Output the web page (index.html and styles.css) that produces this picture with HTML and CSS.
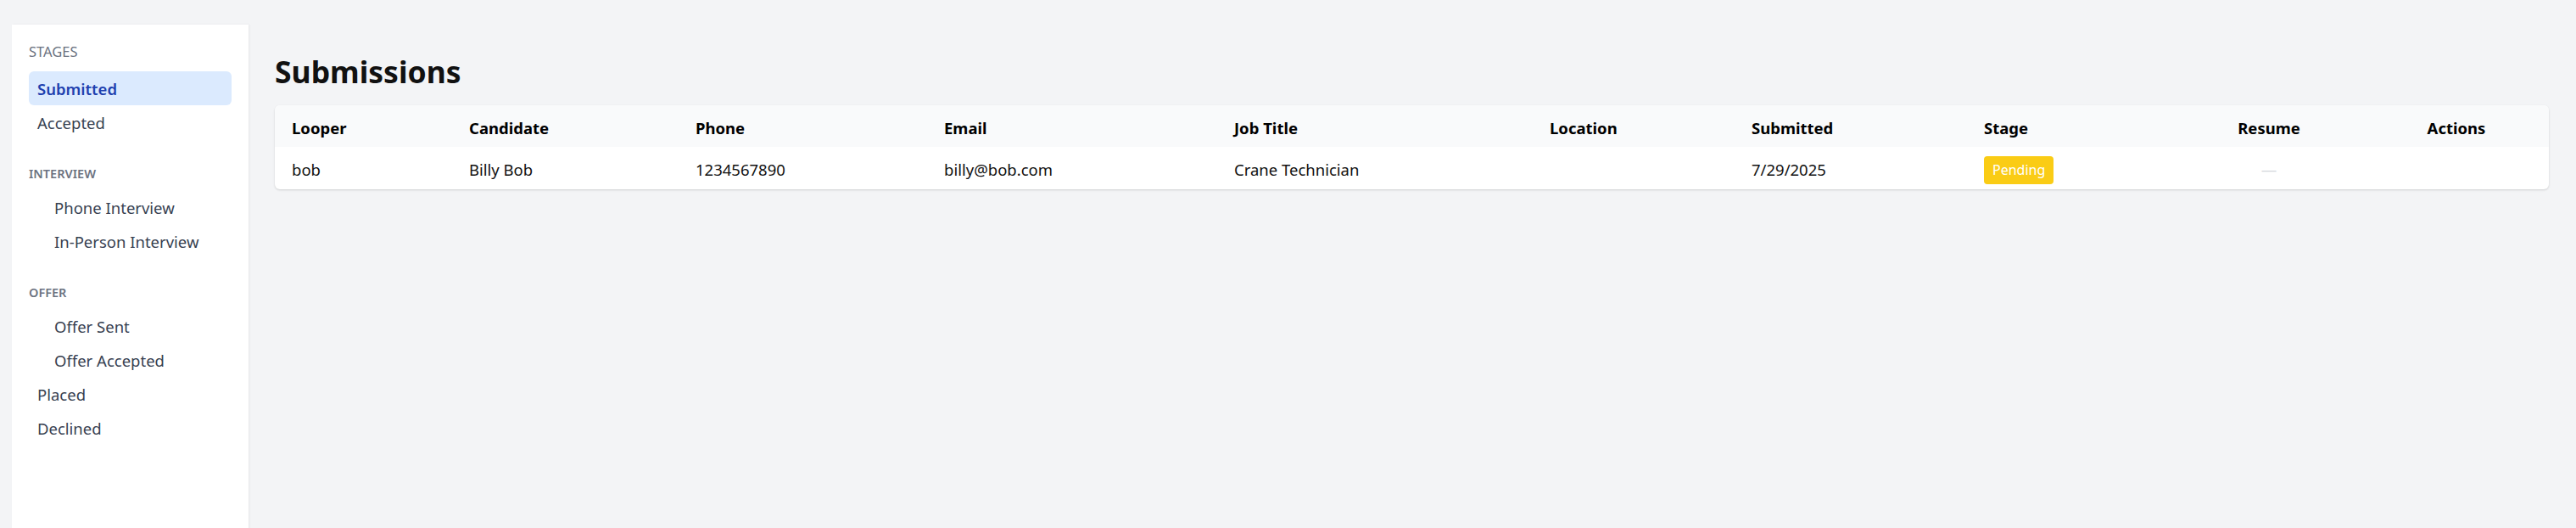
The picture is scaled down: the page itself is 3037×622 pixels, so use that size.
FILE: index.html
```html
<!DOCTYPE html>
<html lang="en">
<head>
<meta charset="utf-8">
<title>Submissions</title>
<link rel="stylesheet" href="styles.css">
</head>
<body>
<div class="layout">
  <aside class="sidebar">
    <div class="section-title">STAGES</div>
    <ul class="nav">
      <li class="nav-item active">Submitted</li>
      <li class="nav-item">Accepted</li>
    </ul>
    <div class="group-title">INTERVIEW</div>
    <ul class="nav sub">
      <li class="nav-item">Phone Interview</li>
      <li class="nav-item">In-Person Interview</li>
    </ul>
    <div class="group-title">OFFER</div>
    <ul class="nav sub">
      <li class="nav-item">Offer Sent</li>
      <li class="nav-item">Offer Accepted</li>
    </ul>
    <ul class="nav">
      <li class="nav-item">Placed</li>
      <li class="nav-item">Declined</li>
    </ul>
  </aside>
  <main class="main">
    <h1 class="page-title">Submissions</h1>
    <div class="card">
      <table class="table">
        <colgroup>
          <col class="c-looper"><col class="c-candidate"><col class="c-phone"><col class="c-email"><col class="c-job"><col class="c-location"><col class="c-submitted"><col class="c-stage"><col class="c-resume"><col class="c-actions">
        </colgroup>
        <thead>
          <tr>
            <th>Looper</th><th>Candidate</th><th>Phone</th><th>Email</th><th>Job Title</th><th>Location</th><th>Submitted</th><th>Stage</th><th class="center">Resume</th><th class="center">Actions</th>
          </tr>
        </thead>
        <tbody>
          <tr>
            <td>bob</td><td>Billy Bob</td><td>1234567890</td><td>billy@bob.com</td><td>Crane Technician</td><td></td><td>7/29/2025</td><td><span class="badge">Pending</span></td><td class="center"><span class="dash">—</span></td><td class="center"></td>
          </tr>
        </tbody>
      </table>
    </div>
  </main>
</div>
</body>
</html>
```
FILE: styles.css
```css
* { box-sizing: border-box; }
html, body { margin: 0; padding: 0; }
body {
  background: #f3f4f6;
  font-family: "Noto Sans", "Open Sans", sans-serif;
  color: #111;
  height: 622px;
  overflow: hidden;
}
.layout {
  display: flex;
  align-items: flex-start;
  padding: 29px 0 0 14px;
}
.sidebar {
  width: 279px;
  flex: none;
  height: 600px;
  background: #fff;
  box-shadow: 1px 0 2px rgba(0,0,0,0.06);
  padding: 20px 20px;
}
.section-title {
  font-size: 16.5px;
  line-height: 24px;
  color: #6b7280;
  margin-bottom: 11px;
}
.group-title {
  font-size: 14.5px;
  line-height: 20px;
  font-weight: 600;
  color: #6b7280;
  margin: 30px 0 10px;
}
.nav { list-style: none; margin: 0; padding: 0; }
.nav.sub { margin-left: 20px; }
.nav-item {
  height: 40px;
  line-height: 42px;
  padding: 0 10px;
  font-size: 18.5px;
  color: #374151;
  border-radius: 6px;
}
.nav-item.active {
  background: #dbeafe;
  color: #1e40af;
  font-weight: 600;
}
.main {
  flex: 1;
  padding: 35px 32px 0 31px;
  min-width: 0;
}
.page-title {
  margin: 0 0 20px;
  font-size: 35.5px;
  line-height: 40px;
  font-weight: 700;
  color: #111;
}
.card {
  background: #fff;
  border-radius: 6px;
  box-shadow: 0 1px 3px rgba(0,0,0,0.1), 0 1px 2px rgba(0,0,0,0.06);
  overflow: hidden;
}
.table {
  width: 100%;
  border-collapse: collapse;
  table-layout: fixed;
  font-size: 18.5px;
  line-height: 24px;
}
.c-looper { width: 209px; }
.c-candidate { width: 267px; }
.c-phone { width: 293px; }
.c-email { width: 342px; }
.c-job { width: 372px; }
.c-location { width: 238px; }
.c-submitted { width: 274px; }
.c-stage { width: 244px; }
.c-resume { width: 224px; }
.c-actions { width: 218px; }
thead tr { height: 49px; background: #f9fafb; }
tbody tr { height: 50px; }
th, td {
  padding: 4px 20px 0;
  text-align: left;
  vertical-align: middle;
  white-space: nowrap;
}
th { font-weight: 700; color: #000; }
td { color: #111; }
.center { text-align: center; }
.badge {
  display: inline-block;
  background: #facc15;
  color: #fff;
  font-size: 16px;
  line-height: 25px;
  padding: 4px 10px;
  border-radius: 4px;
}
.dash { color: #d1d5db; }
```
